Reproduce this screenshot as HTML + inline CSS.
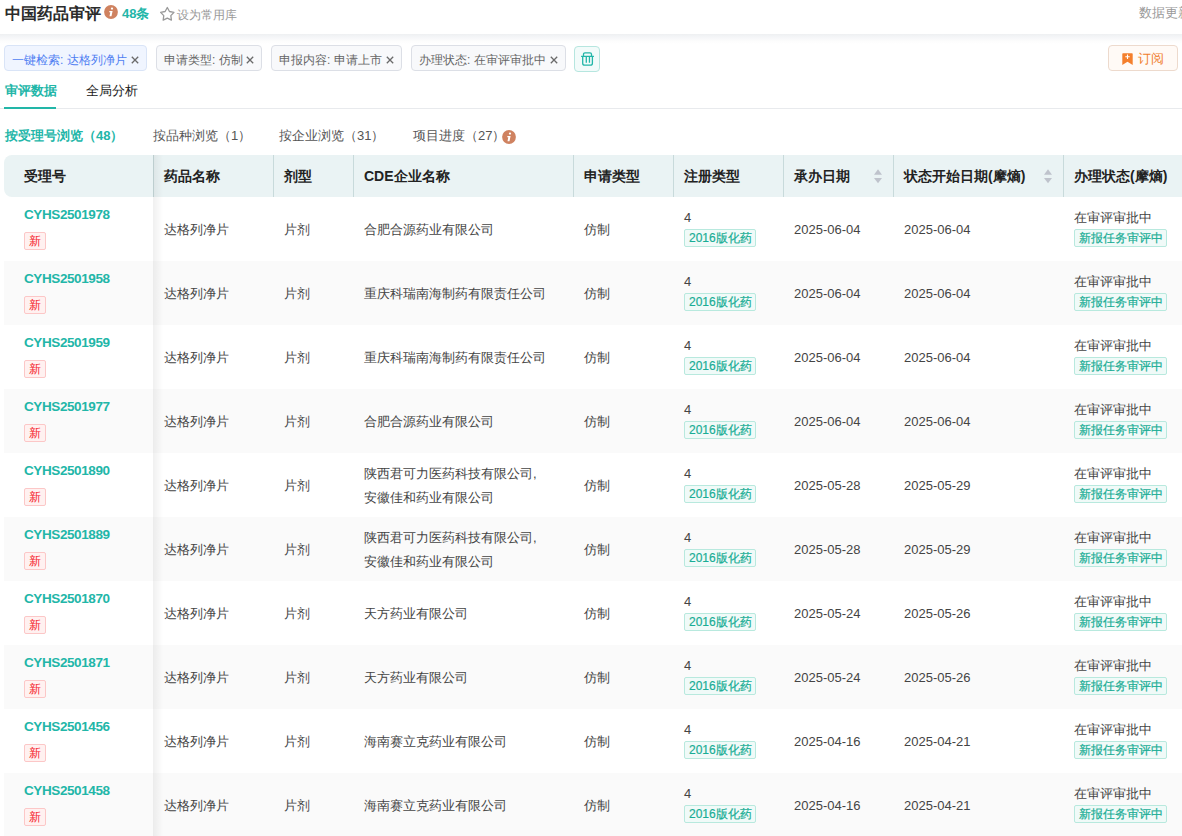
<!DOCTYPE html>
<html><head><meta charset="utf-8">
<style>
*{box-sizing:border-box;margin:0;padding:0}
html,body{width:1182px;height:836px;overflow:hidden;background:#fff}
body{position:relative;font-family:"Liberation Sans",sans-serif;color:#333;font-size:13px}
.abs{position:absolute}
.hdr{position:absolute;left:0;top:0;width:1182px;height:34px;background:#fff}
.shadow{position:absolute;left:0;top:34px;width:1182px;height:10px;background:linear-gradient(#eef0f2,#f5f6f8 35%,#fdfdfd 75%,#fff)}
.title{position:absolute;left:5px;top:2.5px;font-size:16px;font-weight:700;color:#2b2b2b;line-height:22px}
.cnt{position:absolute;left:122px;top:4px;font-size:13px;font-weight:700;color:#22b6a8;line-height:20px}
.fav{position:absolute;left:177px;top:6px;font-size:12px;color:#999;line-height:18px}
.upd{position:absolute;left:1139px;top:3px;font-size:13px;color:#999;line-height:20px;white-space:nowrap}
.tag{position:absolute;top:45px;height:26px;border:1px solid #dcdfe6;background:#f8f9fb;border-radius:4px;font-size:12px;color:#666;line-height:24px;padding-top:2px;padding-left:7px;white-space:nowrap}
.tag .x{position:absolute;right:7px;top:10px}
.tag.blue{background:#f0f5ff;border-color:#d9e4f7;color:#4f7ef2}
.trash{position:absolute;left:574px;top:46px;width:26px;height:26px;border:1px solid #b6e6df;background:#f2fbfa;border-radius:4px}
.sub{position:absolute;left:1108px;top:45px;width:70px;height:26px;border:1px solid #eddacd;background:#fffaf6;border-radius:4px;color:#f07d2c;font-size:13px;line-height:24px}
.tab{position:absolute;top:81px;font-size:13px;line-height:20px}
.tabline{position:absolute;left:0;top:108px;width:1182px;height:1px;background:#e8eaed}
.tabul{position:absolute;left:4px;top:107px;width:52px;height:2px;background:#22b6a8}
.stab{position:absolute;top:125px;font-size:13px;line-height:21px;color:#555;white-space:nowrap}
.th{position:absolute;left:4px;top:155px;width:1178px;height:42px;background:#eaf3f4;font-size:14px;font-weight:700;color:#222;line-height:42px;border-radius:8px 0 0 8px}
.th .h{position:absolute;top:0;padding-left:11px;height:42px;white-space:nowrap}
.th .sep{position:absolute;top:0;width:1px;height:42px;background:#c8dadb}
.th .sort{position:absolute;top:14px}
.body{position:absolute;left:4px;top:197px;width:1178px;height:640px}
.row{position:absolute;left:0;width:1178px;height:64px;background:#fff}
.row.alt{background:#fafafa}
.c{position:absolute;top:0;height:64px;padding-left:11px;display:flex;align-items:center;font-size:13px;color:#444;white-space:nowrap;padding-top:1px}
.c2{left:149px} .c3{left:269px} .c4{left:349px} .c5{left:569px} .c6{left:669px} .c7{left:779px} .c8{left:889px} .c9{left:1059px}
.two{flex-direction:column;align-items:flex-start;justify-content:center;line-height:24px}
.stack{flex-direction:column;align-items:flex-start;justify-content:center;padding-top:0}
.n4,.st{line-height:14px;height:18px}
.tg{display:inline-block;height:18px;line-height:16px;border:1px solid #b8e9de;background:#f0faf8;color:#19ad95;font-size:12px;padding:0 3px 0 4px;-webkit-text-stroke:0.2px #19ad95;border-radius:2px}
.fix{position:absolute;left:0;width:149px;height:64px;background:#fff}
.fix.alt{background:#fafafa}
.fshadow{position:absolute;left:153px;top:155px;width:10px;height:682px;background:linear-gradient(90deg,rgba(0,0,0,.06),rgba(0,0,0,0))}
.no{position:absolute;left:20px;top:10px;font-size:13.5px;letter-spacing:-0.4px;font-weight:700;color:#22b6a8;line-height:16px}
.new{position:absolute;left:20px;top:35px;width:22px;height:18px;border:1px solid #fcc7c7;background:#fff1f0;color:#f5222d;font-size:12px;line-height:17px;text-align:center;border-radius:2px}
</style></head><body>
<div class="hdr">
 <div class="title">中国药品审评</div>
 <svg class="abs" style="left:104px;top:5px" width="14" height="14" viewBox="0 0 14 14"><circle cx="7" cy="7" r="6.9" fill="#cf8260"/><circle cx="8" cy="3.6" r="1.15" fill="#fff"/><path d="M5.4 6.1H8.6L7.5 11.3H5.5L6.3 7.3H5.2Z" fill="#fff"/></svg>
 <div class="cnt">48条</div>
 <svg class="abs" style="left:156px;top:3px" width="24" height="21" viewBox="0 0 24 21"><path d="M11.30 4.50 L13.48 8.50 L17.96 9.34 L14.83 12.65 L15.41 17.16 L11.30 15.21 L7.19 17.16 L7.77 12.65 L4.64 9.34 L9.12 8.50Z" fill="none" stroke="#999" stroke-width="1.3" stroke-linejoin="round"/></svg>
 <div class="fav">设为常用库</div>
 <div class="upd">数据更新</div>
</div>
<div class="shadow"></div>

<div class="tag blue" style="left:4px;width:143px">一键检索: 达格列净片<svg class="x" width="8" height="8" viewBox="0 0 8 8"><path d="M0.8 0.8L7.2 7.2M7.2 0.8L0.8 7.2" stroke="#6a6a6a" stroke-width="1.3"/></svg></div>
<div class="tag" style="left:156px;width:106px">申请类型: 仿制<svg class="x" width="8" height="8" viewBox="0 0 8 8"><path d="M0.8 0.8L7.2 7.2M7.2 0.8L0.8 7.2" stroke="#6a6a6a" stroke-width="1.3"/></svg></div>
<div class="tag" style="left:271px;width:131px">申报内容: 申请上市<svg class="x" width="8" height="8" viewBox="0 0 8 8"><path d="M0.8 0.8L7.2 7.2M7.2 0.8L0.8 7.2" stroke="#6a6a6a" stroke-width="1.3"/></svg></div>
<div class="tag" style="left:411px;width:155px">办理状态: 在审评审批中<svg class="x" width="8" height="8" viewBox="0 0 8 8"><path d="M0.8 0.8L7.2 7.2M7.2 0.8L0.8 7.2" stroke="#6a6a6a" stroke-width="1.3"/></svg></div>
<div class="trash"><svg class="abs" style="left:6px;top:5px" width="14" height="15" viewBox="0 0 14 15"><path d="M2.5 4.4V2.3Q2.5 0.8 4 0.8H9Q10.5 0.8 10.5 2.3V4.4M0.1 4.4H12.9M1.7 4.4V11.2Q1.7 13.2 3.7 13.2H9.4Q11.4 13.2 11.4 11.2V4.4M5.3 4.4V10.7M8.45 4.4V10.7" fill="none" stroke="#22b6a8" stroke-width="1.3"/></svg></div>
<div class="sub"><svg class="abs" style="left:13px;top:6.5px" width="11" height="12" viewBox="0 0 11 12"><path d="M0.3 0.9Q0.3 0.2 1 0.2H10Q10.7 0.2 10.7 0.9V11.9L5.5 8.7L0.3 11.9Z" fill="#f47f2c"/><path d="M5.5 1.6V6.1M3.3 3.8H7.7" stroke="#fff" stroke-width="1.1"/></svg><span class="abs" style="left:29px;top:1px">订阅</span></div>

<div class="tab" style="left:5px;color:#22b6a8;font-weight:700">审评数据</div>
<div class="tab" style="left:86px;color:#222">全局分析</div>
<div class="tabline"></div>
<div class="tabul"></div>

<div class="stab" style="left:5px;color:#22b6a8;font-weight:700">按受理号浏览（48）</div>
<div class="stab" style="left:153px">按品种浏览（1）</div>
<div class="stab" style="left:279px">按企业浏览（31）</div>
<div class="stab" style="left:413px">项目进度（27）</div>
<svg class="abs" style="left:502px;top:130px" width="14" height="14" viewBox="0 0 14 14"><circle cx="7" cy="7" r="6.9" fill="#cf8260"/><circle cx="8" cy="3.6" r="1.15" fill="#fff"/><path d="M5.4 6.1H8.6L7.5 11.3H5.5L6.3 7.3H5.2Z" fill="#fff"/></svg>

<div class="body">
<div class="row" style="top:0px">
<div class="c c2">达格列净片</div><div class="c c3">片剂</div><div class="c c4">合肥合源药业有限公司</div><div class="c c5">仿制</div>
<div class="c c6 stack"><div class="n4">4</div><span class="tg">2016版化药</span></div>
<div class="c c7">2025-06-04</div><div class="c c8">2025-06-04</div>
<div class="c c9 stack"><div class="st">在审评审批中</div><span class="tg b">新报任务审评中</span></div>
</div>
<div class="row alt" style="top:64px">
<div class="c c2">达格列净片</div><div class="c c3">片剂</div><div class="c c4">重庆科瑞南海制药有限责任公司</div><div class="c c5">仿制</div>
<div class="c c6 stack"><div class="n4">4</div><span class="tg">2016版化药</span></div>
<div class="c c7">2025-06-04</div><div class="c c8">2025-06-04</div>
<div class="c c9 stack"><div class="st">在审评审批中</div><span class="tg b">新报任务审评中</span></div>
</div>
<div class="row" style="top:128px">
<div class="c c2">达格列净片</div><div class="c c3">片剂</div><div class="c c4">重庆科瑞南海制药有限责任公司</div><div class="c c5">仿制</div>
<div class="c c6 stack"><div class="n4">4</div><span class="tg">2016版化药</span></div>
<div class="c c7">2025-06-04</div><div class="c c8">2025-06-04</div>
<div class="c c9 stack"><div class="st">在审评审批中</div><span class="tg b">新报任务审评中</span></div>
</div>
<div class="row alt" style="top:192px">
<div class="c c2">达格列净片</div><div class="c c3">片剂</div><div class="c c4">合肥合源药业有限公司</div><div class="c c5">仿制</div>
<div class="c c6 stack"><div class="n4">4</div><span class="tg">2016版化药</span></div>
<div class="c c7">2025-06-04</div><div class="c c8">2025-06-04</div>
<div class="c c9 stack"><div class="st">在审评审批中</div><span class="tg b">新报任务审评中</span></div>
</div>
<div class="row" style="top:256px">
<div class="c c2">达格列净片</div><div class="c c3">片剂</div><div class="c c4 two"><div>陕西君可力医药科技有限公司,</div><div>安徽佳和药业有限公司</div></div><div class="c c5">仿制</div>
<div class="c c6 stack"><div class="n4">4</div><span class="tg">2016版化药</span></div>
<div class="c c7">2025-05-28</div><div class="c c8">2025-05-29</div>
<div class="c c9 stack"><div class="st">在审评审批中</div><span class="tg b">新报任务审评中</span></div>
</div>
<div class="row alt" style="top:320px">
<div class="c c2">达格列净片</div><div class="c c3">片剂</div><div class="c c4 two"><div>陕西君可力医药科技有限公司,</div><div>安徽佳和药业有限公司</div></div><div class="c c5">仿制</div>
<div class="c c6 stack"><div class="n4">4</div><span class="tg">2016版化药</span></div>
<div class="c c7">2025-05-28</div><div class="c c8">2025-05-29</div>
<div class="c c9 stack"><div class="st">在审评审批中</div><span class="tg b">新报任务审评中</span></div>
</div>
<div class="row" style="top:384px">
<div class="c c2">达格列净片</div><div class="c c3">片剂</div><div class="c c4">天方药业有限公司</div><div class="c c5">仿制</div>
<div class="c c6 stack"><div class="n4">4</div><span class="tg">2016版化药</span></div>
<div class="c c7">2025-05-24</div><div class="c c8">2025-05-26</div>
<div class="c c9 stack"><div class="st">在审评审批中</div><span class="tg b">新报任务审评中</span></div>
</div>
<div class="row alt" style="top:448px">
<div class="c c2">达格列净片</div><div class="c c3">片剂</div><div class="c c4">天方药业有限公司</div><div class="c c5">仿制</div>
<div class="c c6 stack"><div class="n4">4</div><span class="tg">2016版化药</span></div>
<div class="c c7">2025-05-24</div><div class="c c8">2025-05-26</div>
<div class="c c9 stack"><div class="st">在审评审批中</div><span class="tg b">新报任务审评中</span></div>
</div>
<div class="row" style="top:512px">
<div class="c c2">达格列净片</div><div class="c c3">片剂</div><div class="c c4">海南赛立克药业有限公司</div><div class="c c5">仿制</div>
<div class="c c6 stack"><div class="n4">4</div><span class="tg">2016版化药</span></div>
<div class="c c7">2025-04-16</div><div class="c c8">2025-04-21</div>
<div class="c c9 stack"><div class="st">在审评审批中</div><span class="tg b">新报任务审评中</span></div>
</div>
<div class="row alt" style="top:576px">
<div class="c c2">达格列净片</div><div class="c c3">片剂</div><div class="c c4">海南赛立克药业有限公司</div><div class="c c5">仿制</div>
<div class="c c6 stack"><div class="n4">4</div><span class="tg">2016版化药</span></div>
<div class="c c7">2025-04-16</div><div class="c c8">2025-04-21</div>
<div class="c c9 stack"><div class="st">在审评审批中</div><span class="tg b">新报任务审评中</span></div>
</div>
<div class="fix" style="top:0px"><div class="no">CYHS2501978</div><span class="new">新</span></div>
<div class="fix alt" style="top:64px"><div class="no">CYHS2501958</div><span class="new">新</span></div>
<div class="fix" style="top:128px"><div class="no">CYHS2501959</div><span class="new">新</span></div>
<div class="fix alt" style="top:192px"><div class="no">CYHS2501977</div><span class="new">新</span></div>
<div class="fix" style="top:256px"><div class="no">CYHS2501890</div><span class="new">新</span></div>
<div class="fix alt" style="top:320px"><div class="no">CYHS2501889</div><span class="new">新</span></div>
<div class="fix" style="top:384px"><div class="no">CYHS2501870</div><span class="new">新</span></div>
<div class="fix alt" style="top:448px"><div class="no">CYHS2501871</div><span class="new">新</span></div>
<div class="fix" style="top:512px"><div class="no">CYHS2501456</div><span class="new">新</span></div>
<div class="fix alt" style="top:576px"><div class="no">CYHS2501458</div><span class="new">新</span></div>
</div>

<div class="th">
 <div class="h" style="left:0;padding-left:20px">受理号</div>
 <div class="sep" style="left:149px"></div><div class="h" style="left:149px">药品名称</div>
 <div class="sep" style="left:269px"></div><div class="h" style="left:269px">剂型</div>
 <div class="sep" style="left:349px"></div><div class="h" style="left:349px">CDE企业名称</div>
 <div class="sep" style="left:569px"></div><div class="h" style="left:569px">申请类型</div>
 <div class="sep" style="left:669px"></div><div class="h" style="left:669px">注册类型</div>
 <div class="sep" style="left:779px"></div><div class="h" style="left:779px">承办日期</div><svg class="sort" style="left:870px" width="8" height="15" viewBox="0 0 8 15"><path d="M4 0.3L8 5.7H0z" fill="#bfc3cc"/><path d="M0 9.1h8L4 14.3z" fill="#bfc3cc"/></svg>
 <div class="sep" style="left:889px"></div><div class="h" style="left:889px">状态开始日期(摩熵)</div><svg class="sort" style="left:1040px" width="8" height="15" viewBox="0 0 8 15"><path d="M4 0.3L8 5.7H0z" fill="#bfc3cc"/><path d="M0 9.1h8L4 14.3z" fill="#bfc3cc"/></svg>
 <div class="sep" style="left:1059px"></div><div class="h" style="left:1059px">办理状态(摩熵)</div>
</div>
<div class="fshadow"></div>
</body></html>
